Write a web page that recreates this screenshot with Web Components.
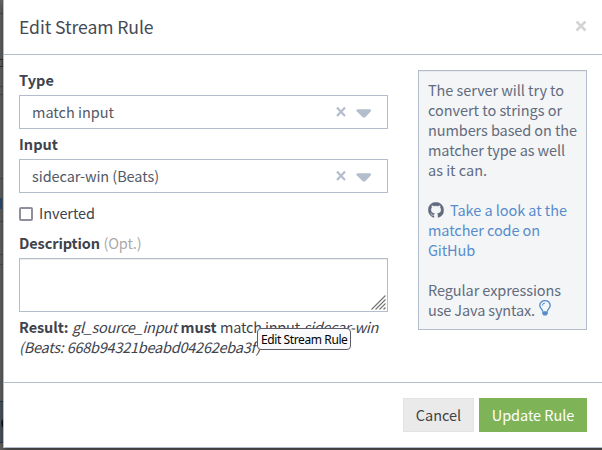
<!DOCTYPE html>
<html lang="en"><head><meta charset="utf-8"><title>Edit Stream Rule</title>
<style>html,body{margin:0;width:602px;height:450px;overflow:hidden;background:#fff}</style></head><body>
<rule-page></rule-page>
<script>
const define=(name,html,setup)=>customElements.define(name,class extends HTMLElement{
  connectedCallback(){
    if(this.shadowRoot)return;
    const t=document.createElement('template');t.innerHTML=html;
    this.attachShadow({mode:'open'}).append(t.content.cloneNode(true));
    if(setup)setup(this,this.shadowRoot);
  }
});
// A run of text tracked to an exact advance width.
define('fit-text','<style>:host{display:inline-block;white-space:pre}</style><slot></slot>',(el)=>{
  const w=+el.getAttribute('w'),n=el.textContent.length;
  el.style.letterSpacing=((w-el.getBoundingClientRect().width)/n).toFixed(4)+'px';
});
define('select-box',`<style>
:host{display:flex;align-items:center;box-sizing:border-box;height:34px;border:1px solid #b4bdcc;background:#fff;padding:0 15px 0 12px;color:#525967}
.v{flex:1;line-height:20px}svg{display:block}</style>
<span class="v"><slot></slot></span>
<svg width="36" height="16" viewBox="0 0 36 16"><path d="M1 3.5L9 12M9 3.5L1 12" stroke="#b4bdcc" stroke-width="2.2"/><path d="M21.8 5.2H33.6Q36.2 5.6 34.6 7.6L29.5 13Q28 14.2 26.5 13L20.9 7.6Q19.3 5.6 21.8 5.2Z" fill="#b4bdcc"/></svg>`);
define('check-box',`<style>:host{display:flex;gap:6px;align-items:center;height:20px}i{box-sizing:border-box;width:14px;height:14px;border:2px solid #8f8f9d;border-radius:2px;background:#fff}span{margin-top:-2px}</style><i></i><span><slot></slot></span>`);
define('text-area',`<style>:host{display:flex;justify-content:flex-end;align-items:flex-end;box-sizing:border-box;height:54px;border:1px solid #b4bdcc;padding:1px;background:#fff;box-shadow:inset 0 1px 1px rgba(0,0,0,.075)}svg{display:block}</style>
<svg width="15" height="15" viewBox="0 0 15 15"><path d="M.5 14.5L14.5.5M4.5 14.5L14.5 4.5M8.5 14.5L14.5 8.5M12.5 14.5L14.5 12.5" stroke="#767676" stroke-width="1.2"/></svg>`);
define('action-button',`<style>:host{display:flex;align-items:center;justify-content:center;box-sizing:border-box;height:34px;width:71px;background:#eaeaea;border:1px solid #e3e3e3;color:#424242;line-height:20px}
:host([primary]){width:108px;background:#7fb357;border-color:#7fb357;color:#fff}</style><slot></slot>`);
define('help-panel',`<style>:host{display:block;box-sizing:border-box;width:169px;height:260px;border:1px solid #b4bdcc;background:#f4f5f7;padding:9px 0 0 9px;color:#626c7e;line-height:20px;box-shadow:inset 0 1px 1px rgba(0,0,0,.05)}
.l{height:20px;display:flex;align-items:center}.a{color:#578dcc}.g{margin-right:6px}.b{margin:-5px 0 0 4px}svg{display:block;flex:none}</style>
<div class="l"><fit-text w="136">The server will try to</fit-text></div>
<div class="l"><fit-text w="134">convert to strings or</fit-text></div>
<div class="l"><fit-text w="149">numbers based on the</fit-text></div>
<div class="l"><fit-text w="137">matcher type as well</fit-text></div>
<div class="l"><fit-text w="59">as it can.</fit-text></div>
<div class="l"></div>
<div class="l a"><svg class="g" width="16" height="16" viewBox="0 0 16 16" fill="#626c7e" stroke="#626c7e" stroke-width=".35"><path d="M8 .3C3.58.3.3 3.58.3 8c0 3.54 2.1 6.3 5.17 7.4.4.07.55-.17.55-.38v-1.34c-2.23.48-2.7-.95-2.7-.95-.36-.92-.89-1.17-.89-1.17-.73-.5.05-.49.05-.49.81.06 1.23.83 1.23.83.72 1.23 1.88.87 2.34.67.07-.52.28-.88.51-1.08-1.78-.2-3.64-.89-3.64-3.95 0-.87.31-1.59.82-2.15-.08-.2-.36-1.02.08-2.12 0 0 .67-.21 2.2.82a7.6 7.6 0 0 1 4 0c1.53-1.04 2.2-.82 2.2-.82.44 1.1.16 1.92.08 2.12.51.56.82 1.27.82 2.15 0 3.07-1.87 3.75-3.65 3.95.29.25.54.73.54 1.48v2.05c0 .21.15.46.55.38A7.7 7.7 0 0 0 15.7 8 7.7 7.7 0 0 0 8 .3Z"/></svg><fit-text w="117">Take a look at the</fit-text></div>
<div class="l a"><fit-text w="112">matcher code on</fit-text></div>
<div class="l a"><fit-text w="47">GitHub</fit-text></div>
<div class="l"></div>
<div class="l"><fit-text w="133">Regular expressions</fit-text></div>
<div class="l"><fit-text w="107">use Java syntax.</fit-text><svg class="b" width="12" height="16" viewBox="0 0 12 17" preserveAspectRatio="none" fill="none" stroke="#578dcc" stroke-width="1.4"><path d="M3.6 11.8C3.5 9.7.8 8.8.8 5.8a5.2 5.2 0 0 1 10.4 0c0 3-2.7 3.9-2.8 6"/><path d="M3.4 6A2.6 2.6 0 0 1 6 3.3" stroke-width="1"/><path d="M3.2 12h5.6v2.4L7.5 16.5h-3L3.2 14.4Z" fill="#578dcc" stroke="none"/></svg></div>`);
define('tool-tip',`<style>:host{position:absolute;left:257px;top:328px;width:94px;height:22px;box-sizing:border-box;border:1px solid #5c5c66;border-radius:4px;background:#f9f9fb;color:#000;font:12px/22px "Noto Sans",sans-serif;padding-left:3px}</style><fit-text w="86.5">Edit Stream Rule</fit-text>`);
define('rule-form',`<style>:host{display:flex;flex-direction:column;width:369px;line-height:20px}
b{font-weight:700}.lab{height:25px;display:flex}.in{margin-top:5px;height:25px}check-box{margin-top:11px}.ds{margin-top:9px;height:25px;gap:3.5px}.o{color:#aaa}.res{margin-top:5px}.r{display:flex;gap:3.5px;height:20px}i{font-style:italic}</style>
<b class="lab"><fit-text w="35">Type</fit-text></b>
<select-box><fit-text w="82">match input</fit-text></select-box>
<b class="lab in"><fit-text w="39">Input</fit-text></b>
<select-box><fit-text w="127">sidecar-win (Beats)</fit-text></select-box>
<check-box><fit-text w="56">Inverted</fit-text></check-box>
<div class="lab ds"><b><fit-text w="81">Description</fit-text></b><span class="o"><fit-text w="38">(Opt.)</fit-text></span></div>
<text-area></text-area>
<div class="res"><div class="r"><b><fit-text w="49.5">Result:</fit-text></b><i><fit-text w="105">gl_source_input</fit-text></i><b><fit-text w="36">must</fit-text></b><span><fit-text w="80">match input</fit-text></span><i><fit-text w="74.5">sidecar-win</fit-text></i></div>
<div class="r"><i><fit-text w="241.5">(Beats: 668b94321beabd04262eba3f)</fit-text></i></div></div>`);
define('modal-dialog',`<style>:host{display:flex;flex-direction:column;box-sizing:border-box;width:610px;height:448px;background:#fff;border:1px solid #b4bdcc;border-top:0;box-shadow:0 3px 8px rgba(0,0,0,.5);flex:none}
header{height:54px;border-bottom:1px solid #b4bdcc;display:flex;align-items:center;justify-content:space-between;padding:0 25px 0 15px;box-sizing:content-box;font-size:17.6px;line-height:26px;color:#464a55}
header svg{margin-top:-2px}main{height:327px;display:flex;gap:30px;padding:15px 0 0 15px;box-sizing:border-box}footer{flex:1;border-top:1px solid #b4bdcc;display:flex;justify-content:flex-end;gap:5px;padding:15px 25px 0 0}</style>
<header><fit-text w="134.5">Edit Stream Rule</fit-text><svg width="12" height="12" viewBox="0 0 12 12"><path d="M1.5 1.5L10.5 10.5M10.5 1.5L1.5 10.5" stroke="#d4d5d7" stroke-width="2.8"/></svg></header>
<main><rule-form></rule-form><help-panel></help-panel></main>
<footer><action-button><fit-text w="45.5">Cancel</fit-text></action-button><action-button primary><fit-text w="82.5">Update Rule</fit-text></action-button></footer>`);
define('rule-page',`<style>:host{display:block;position:relative;width:602px;height:450px;overflow:hidden;background:#666;font:14.5px/20px "Noto Sans CJK SC","Noto Sans",sans-serif;color:#3e434c}
.bg{position:absolute;left:0;top:0;display:block}modal-dialog{margin-left:3px;position:relative}</style>
<svg class="bg" width="602" height="450"><path d="M0 13.5H3M0 86.5H3M0 94.5H3M0 178.5H3M0 221.5H3M0 254.5H3M0 264.5H3" stroke="#4c5058"/><path d="M0 59.5H3V66.5H0" fill="none" stroke="#333"/><path d="M0 198h2v11H0" fill="#29527e"/><rect y="401" width="4" height="42" fill="#505762"/><path d="M0 401.5H3M0 442.5H3" stroke="#223b5a"/><path d="M3 419a3 5 0 0 0 0 9" fill="#111"/></svg>
<modal-dialog></modal-dialog><tool-tip></tool-tip>`);
</script></body></html>
